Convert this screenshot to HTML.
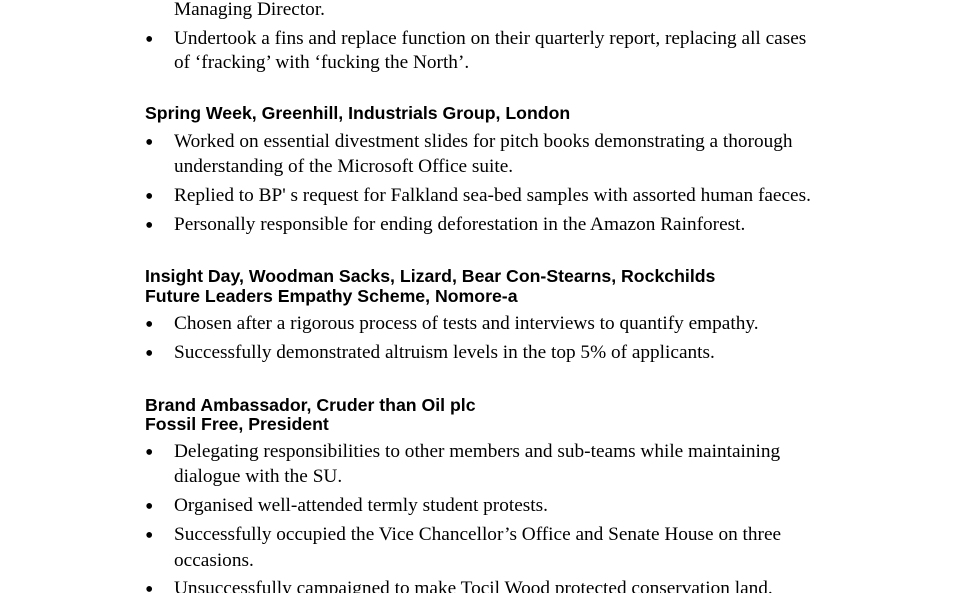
<!DOCTYPE html>
<html><head><meta charset="utf-8"><style>
html,body{margin:0;padding:0;background:#fff;width:960px;height:593px;overflow:hidden;position:relative}
.t{position:absolute;left:174px;font-family:"Liberation Serif",serif;font-size:19.3px;line-height:20px;height:20px;white-space:nowrap;color:#000;margin-top:1px}
.b{position:absolute;left:145px;font-family:"Liberation Serif",serif;font-size:24px;line-height:20px;color:#000;margin-top:1px}
.h{position:absolute;left:145px;font-family:"Liberation Sans",sans-serif;font-weight:bold;font-size:17.7px;line-height:20px;white-space:nowrap;color:#000}
</style></head><body>
<div class="t" style="top:-1px">Managing Director.</div>
<div class="b" style="top:29px">•</div><div class="t" style="top:28px">Undertook a fins and replace function on their quarterly report, replacing all cases</div>
<div class="t" style="top:52px">of ‘fracking’ with ‘fucking the North’.</div>
<div class="h" style="top:103px">Spring Week, Greenhill, Industrials Group, London</div>
<div class="b" style="top:132px">•</div><div class="t" style="top:131px">Worked on essential divestment slides for pitch books demonstrating a thorough</div>
<div class="t" style="top:156px">understanding of the Microsoft Office suite.</div>
<div class="b" style="top:186px">•</div><div class="t" style="top:185px">Replied to BP' s request for Falkland sea-bed samples with assorted human faeces.</div>
<div class="b" style="top:215px">•</div><div class="t" style="top:214px">Personally responsible for ending deforestation in the Amazon Rainforest.</div>
<div class="h" style="top:266px">Insight Day, Woodman Sacks, Lizard, Bear Con-Stearns, Rockchilds</div>
<div class="h" style="top:286px">Future Leaders Empathy Scheme, Nomore-a</div>
<div class="b" style="top:314px">•</div><div class="t" style="top:313px">Chosen after a rigorous process of tests and interviews to quantify empathy.</div>
<div class="b" style="top:343px">•</div><div class="t" style="top:342px">Successfully demonstrated altruism levels in the top 5% of applicants.</div>
<div class="h" style="top:395px">Brand Ambassador, Cruder than Oil plc</div>
<div class="h" style="top:414px">Fossil Free, President</div>
<div class="b" style="top:442px">•</div><div class="t" style="top:441px">Delegating responsibilities to other members and sub-teams while maintaining</div>
<div class="t" style="top:466px">dialogue with the SU.</div>
<div class="b" style="top:496px">•</div><div class="t" style="top:495px">Organised well-attended termly student protests.</div>
<div class="b" style="top:525px">•</div><div class="t" style="top:524px">Successfully occupied the Vice Chancellor’s Office and Senate House on three</div>
<div class="t" style="top:550px">occasions.</div>
<div class="b" style="top:579px">•</div><div class="t" style="top:578px">Unsuccessfully campaigned to make Tocil Wood protected conservation land.</div>
</body></html>
